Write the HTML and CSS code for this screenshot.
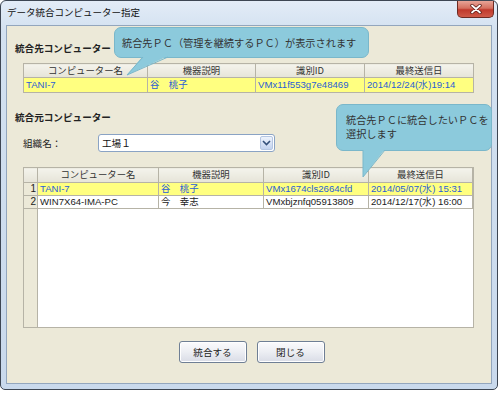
FILE: index.html
```
<!DOCTYPE html>
<html lang="ja">
<head>
<meta charset="utf-8">
<title>データ統合コンピューター指定</title>
<link rel="stylesheet" href="styles.css">
</head>
<body>
<div class="window">
  <div class="titlebar">
    <span class="title">データ統合コンピューター指定</span>
    <button class="close" type="button" aria-label="閉じる">
      <svg width="14" height="10" viewBox="0 0 14 10"><path d="M3 1.5 L11 8.5 M11 1.5 L3 8.5" stroke="#5a1a14" stroke-width="3.4" stroke-linecap="round"/><path d="M3 1.5 L11 8.5 M11 1.5 L3 8.5" stroke="#fff" stroke-width="1.8" stroke-linecap="round"/></svg>
    </button>
  </div>
  <div class="content">
    <div class="section-label first">統合先コンピューター</div>
    <table class="grid top">
      <colgroup><col class="c1"><col class="c2"><col class="c3"><col class="c4"></colgroup>
      <thead><tr><th>コンピューター名</th><th>機器説明</th><th>識別ID</th><th>最終送信日</th></tr></thead>
      <tbody><tr class="sel"><td class="lat">TANI-7</td><td>谷　桃子</td><td class="lat">VMx11f553g7e48469</td><td class="lat">2014/12/24(水)19:14</td></tr></tbody>
    </table>

    <div class="section-label second">統合元コンピューター</div>
    <div class="org-row">
      <span class="org-label">組織名：</span>
      <div class="combo">
        <span class="combo-text">工場１</span>
        <span class="combo-btn"><svg width="9" height="6" viewBox="0 0 9 6"><path d="M1 1 L4.5 4.5 L8 1" fill="none" stroke="#34507a" stroke-width="1.6"/></svg></span>
      </div>
    </div>

    <div class="list">
      <table class="grid bottom">
        <colgroup><col class="n"><col class="b1"><col class="b2"><col class="b3"><col class="b4"></colgroup>
        <thead><tr><th class="num"></th><th>コンピューター名</th><th>機器説明</th><th>識別ID</th><th>最終送信日</th></tr></thead>
        <tbody>
          <tr class="sel"><td class="num">1</td><td class="lat">TANI-7</td><td>谷　桃子</td><td class="lat">VMx1674cls2664cfd</td><td class="lat">2014/05/07(水) 15:31</td></tr>
          <tr><td class="num">2</td><td class="lat">WIN7X64-IMA-PC</td><td>今　幸志</td><td class="lat">VMxbjznfq05913809</td><td class="lat">2014/12/17(水) 16:00</td></tr>
        </tbody>
      </table>
    </div>

    <div class="buttons">
      <button class="btn" type="button">統合する</button>
      <button class="btn" type="button">閉じる</button>
    </div>
  </div>

  <div class="bubble b1">統合先ＰＣ（管理を継続するＰＣ）が表示されます</div>
  <svg class="tail t1" width="46" height="20" viewBox="0 0 46 20"><path d="M17 0 L42 0 L1 19 Z" fill="#8ccadc"/><path d="M17 1 L1 19 L42 1" fill="none" stroke="#7ab7ca" stroke-width="1"/></svg>
  <div class="bubble b2"><span class="line">統合先ＰＣに統合したいＰＣを</span><span class="line">選択します</span></div>
  <svg class="tail t2" width="26" height="30" viewBox="0 0 26 30"><path d="M1 0 L23 0 L1 28 Z" fill="#8ccadc"/><path d="M1 1 L1 28 L23 1" fill="none" stroke="#7ab7ca" stroke-width="1"/></svg>
</div>
</body>
</html>
```
FILE: styles.css
```
* { box-sizing: border-box; }
html, body { margin: 0; background: #fff; }
body {
  font-family: "Noto Sans CJK JP", "Liberation Sans", sans-serif;
  color: #222;
}
.window {
  position: relative;
  width: 498px;
  height: 390px;
  border: 1px solid #3d4653;
  border-radius: 6px 6px 5px 5px;
  background: linear-gradient(#e3ecf7 0, #d3e1f0 30px, #c9d9ec 100%);
  padding: 0 5px 5px 5px;
  display: flex;
  flex-direction: column;
}
.titlebar {
  height: 24px;
  display: flex;
  align-items: flex-start;
  justify-content: space-between;
  margin: 0 -2px 0 0;
}
.title {
  font-size: 9.5px;
  line-height: 1;
  margin-top: 7px;
  margin-left: 1px;
  color: #111;
}
.close {
  width: 37px;
  height: 17px;
  margin: 0;
  padding: 0;
  border: 1px solid #6d2a22;
  border-top: none;
  border-radius: 0 0 5px 5px;
  background: linear-gradient(#e8a497 0, #d5705f 45%, #c0392c 55%, #cf5a48 100%);
  display: flex;
  align-items: center;
  justify-content: center;
}
.content {
  flex: 1;
  border: 1px solid #93a6bd;
  background: #ece9d8;
  padding: 0 0 0 8px;
  display: flex;
  flex-direction: column;
}
.section-label {
  font-size: 9.6px;
  font-weight: bold;
  line-height: 14px;
  height: 14px;
  color: #222;
}
.section-label.first { margin-top: 15px; }
.section-label.second { margin-top: 17px; }
.grid {
  border-collapse: collapse;
  table-layout: fixed;
  font-size: 9.4px;
}
.grid th {
  background: linear-gradient(#f4f3ec, #e6e4d8);
  font-weight: normal;
  border: 1px solid #b6b3a6;
  color: #333;
  text-align: center;
  padding: 0;
  line-height: 1;
}
.grid td {
  border: 1px solid #b6b3a6;
  padding: 0 2px;
  line-height: 1;
  white-space: nowrap;
  overflow: hidden;
  color: #222;
}
.grid .lat { font-family: "Liberation Sans", sans-serif; font-size: 9.6px; }
.grid tr.sel td { background: #ffff80; color: #2a5ed6; }
.grid.top { margin: 8px 0 0 8px; width: 450px; }
.grid.top th { height: 14px; }
.grid.top td { height: 15px; }
.grid.top col.c1 { width: 124px; }
.grid.top col.c2 { width: 108px; }
.grid.top col.c3 { width: 109px; }
.grid.top col.c4 { width: 109px; }

.org-row {
  display: flex;
  align-items: center;
  margin: 10px 0 0 8px;
  height: 18px;
}
.org-label { font-size: 9.6px; width: 75px; color: #222; }
.combo {
  width: 177px;
  height: 18px;
  border: 1px solid #8aa3c4;
  border-radius: 3px;
  background: #fff;
  display: flex;
  align-items: center;
  justify-content: space-between;
  padding: 0 1px 0 3px;
}
.combo-text { font-size: 9.6px; color: #111; }
.combo-btn {
  width: 13px;
  height: 14px;
  border: 1px solid #b5c6e2;
  border-radius: 2px;
  background: linear-gradient(#eef3fc, #c3d3ef);
  display: flex;
  align-items: center;
  justify-content: center;
}
.list {
  margin: 15px 0 0 8px;
  width: 451px;
  height: 161px;
  border: 1px solid #b6b3a6;
  border-top: none;
  background: linear-gradient(to right, #ece9d8 0, #ece9d8 13px, #b6b3a6 13px, #b6b3a6 14px, #fff 14px);
}
.grid.bottom { width: 450px; margin: 0 0 0 -1px; }
.grid.bottom th { height: 15px; }
.grid.bottom td { height: 13px; }
.grid.bottom col.n { width: 14px; }
.grid.bottom col.b1 { width: 121px; }
.grid.bottom col.b2 { width: 105px; }
.grid.bottom col.b3 { width: 105px; }
.grid.bottom col.b4 { width: 105px; }
.grid td.num, .grid tr.sel td.num {
  background: #ece9d8;
  color: #222;
  text-align: right;
  padding: 0 1px 0 0;
  font-family: "Liberation Sans", sans-serif;
  font-size: 10px;
}
.buttons {
  display: flex;
  justify-content: center;
  gap: 10px;
  margin-top: 13px;
  padding-right: 3px;
}
.btn {
  width: 68px;
  height: 22px;
  border: 1px solid #6f7f95;
  border-radius: 3px;
  background: linear-gradient(#fbfbfd 0, #eceef3 50%, #d9dce6 100%);
  box-shadow: inset 0 0 0 1px #fff;
  font-family: "Noto Sans CJK JP", sans-serif;
  font-size: 9.6px;
  color: #222;
  padding: 0;
}
.bubble {
  position: absolute;
  background: #8ccadc;
  border: 1px solid #7ab7ca;
  border-radius: 7px;
  color: #333;
  font-size: 10.2px;
  line-height: 13px;
}
.b1 {
  left: 113px;
  top: 26px;
  width: 255px;
  height: 31px;
  padding: 8px 0 0 7px;
}
.b2 {
  left: 335px;
  top: 103px;
  width: 156px;
  height: 47px;
  padding: 8px 0 0 9px;
  display: flex;
  flex-direction: column;
  gap: 0;
}
.b2 .line { display: block; height: 14px; line-height: 14px; }
.tail { position: absolute; }
.t1 { left: 125px; top: 55px; }
.t2 { left: 361px; top: 148px; }
```
